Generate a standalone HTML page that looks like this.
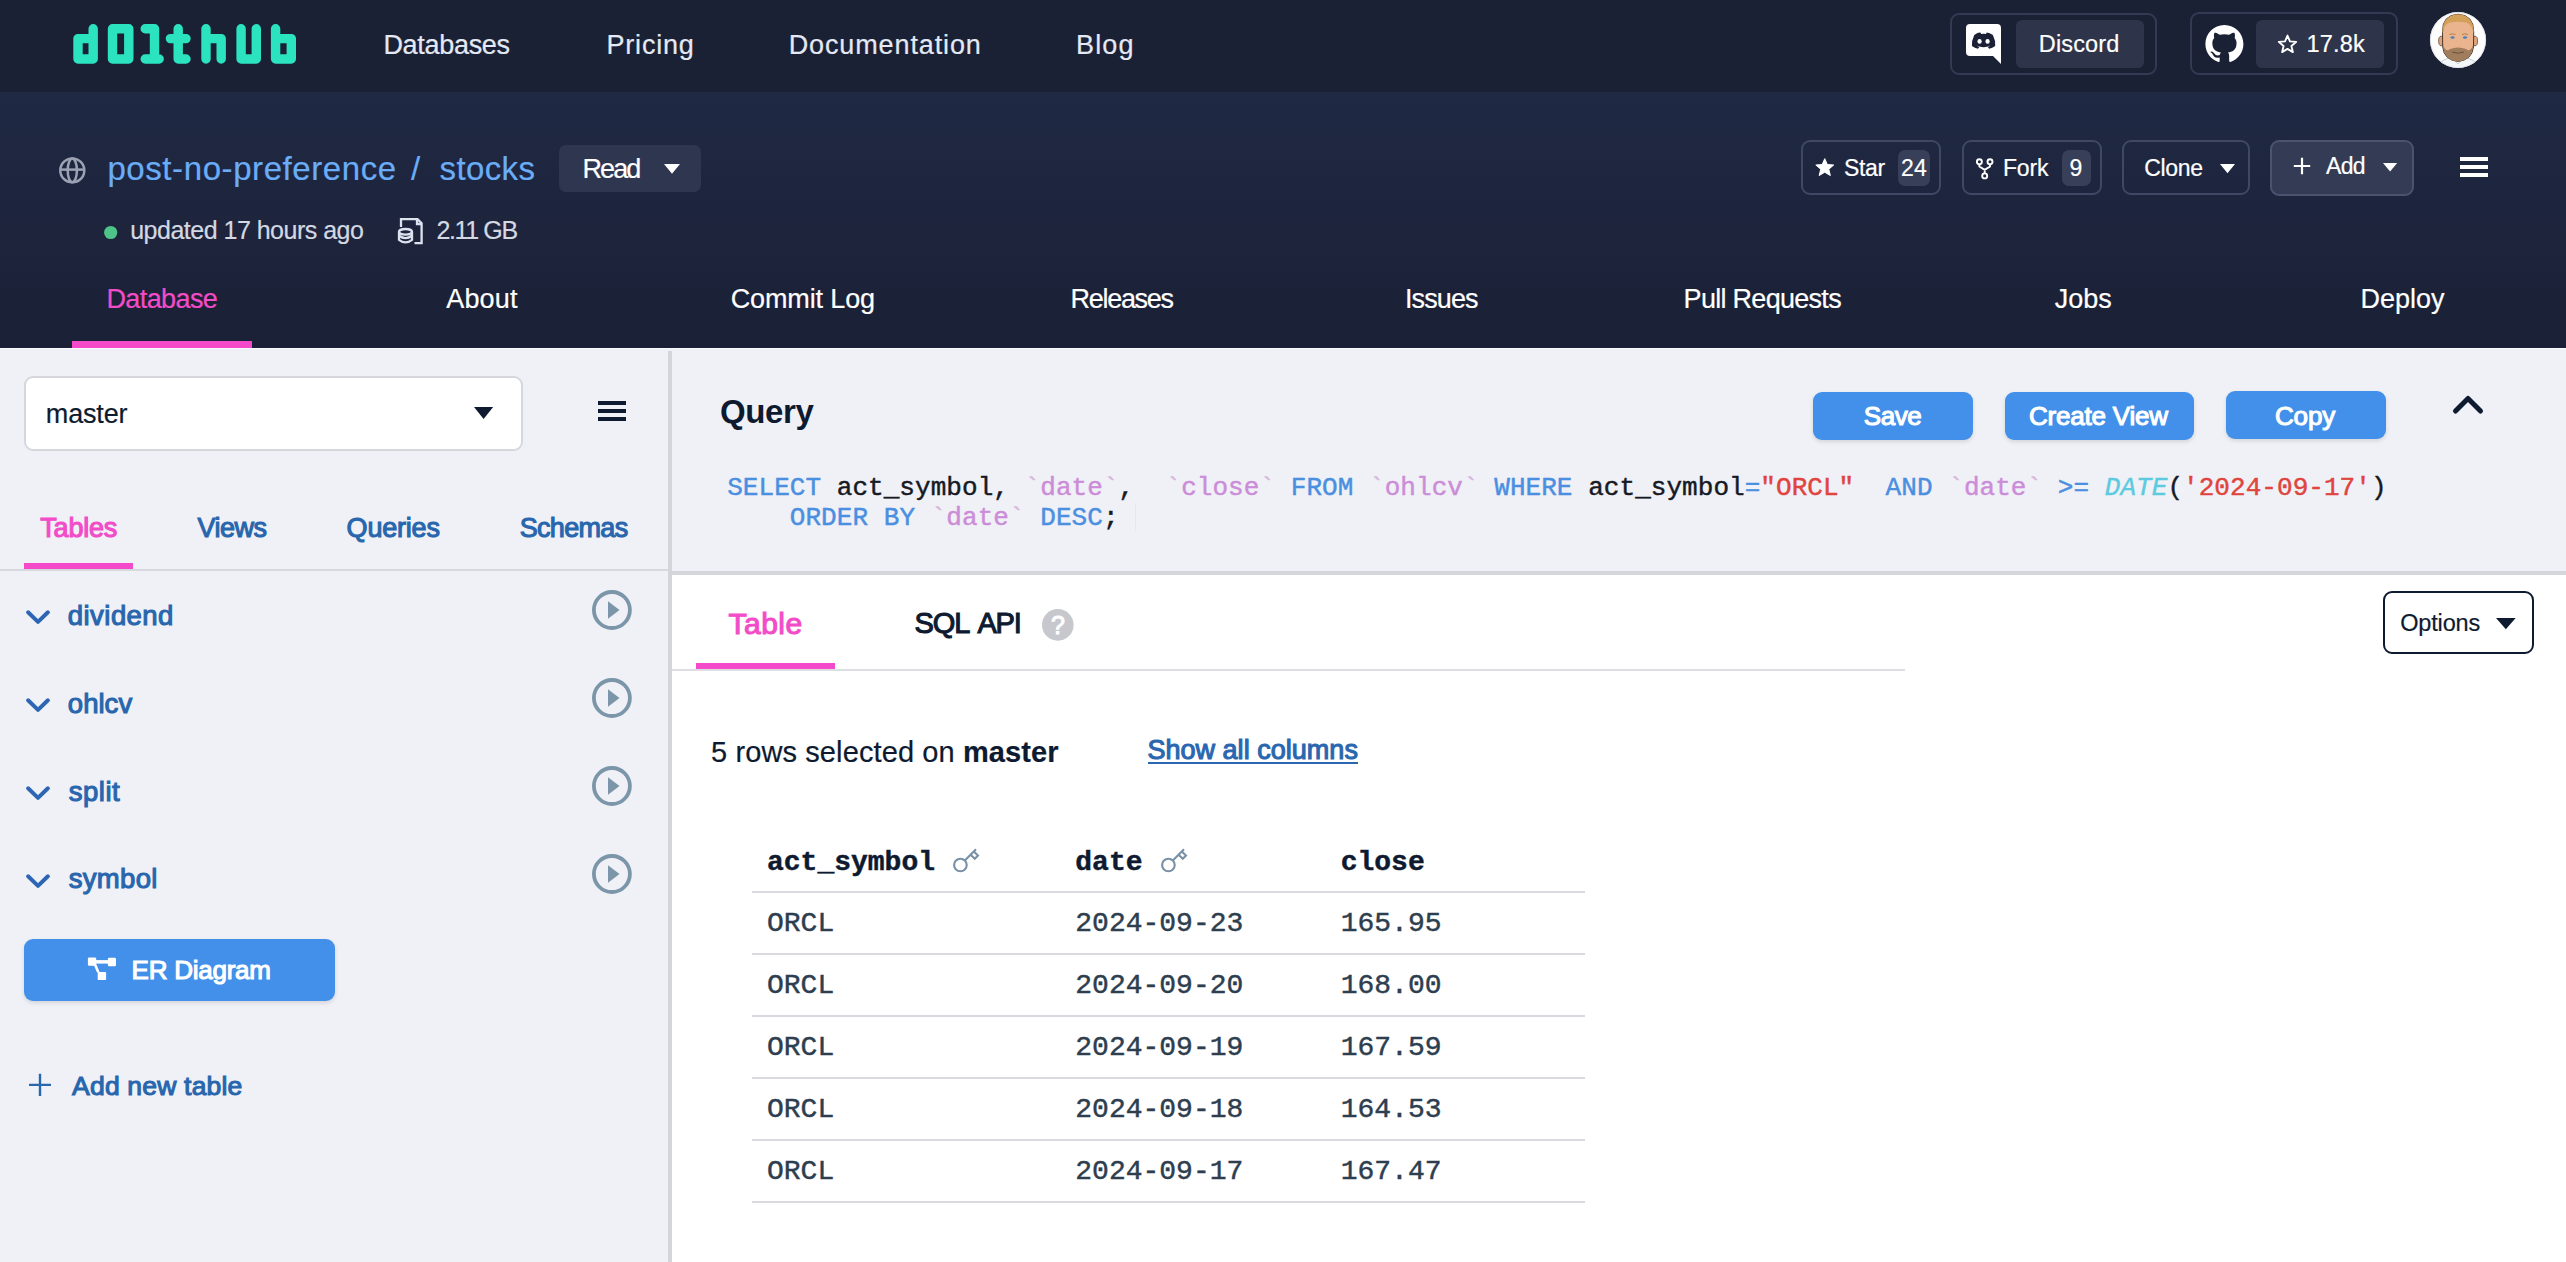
<!DOCTYPE html>
<html><head><meta charset="utf-8">
<style>
html,body{margin:0;padding:0;width:2566px;height:1262px;overflow:hidden;background:#f0f1f7;font-family:"Liberation Sans",sans-serif;}
.a{position:absolute;}
.t{position:absolute;white-space:pre;line-height:1;}
.m{font-family:"Liberation Mono",monospace;-webkit-text-stroke:0.45px currentColor;}
svg{position:absolute;overflow:visible;}
.bx{position:absolute;box-sizing:border-box;}
</style></head><body>
<!-- top nav -->
<div class="a" style="left:0;top:0;width:2566px;height:92px;background:#1b2135"></div>
<!-- repo header -->
<div class="a" style="left:0;top:92px;width:2566px;height:256px;background:linear-gradient(180deg,#202944 0%,#1d243c 55%,#1a2035 100%)"></div>
<div class="a" style="left:0;top:348px;width:2566px;height:1px;background:#fbfbfd"></div>

<!-- logo -->
<svg width="2566" height="100" style="left:0;top:0" viewBox="0 0 2566 100">
 <g fill="none" stroke="#2ce3c0" stroke-width="9.4" stroke-linejoin="round" stroke-linecap="round">
  <!-- d -->
  <path d="M93.2,28.7 V59 H78 V38.6 H93.2"/>
  <!-- 0 -->
  <path d="M112.5,28.7 H128.8 V59 H112.5 Z"/>
  <!-- 1 -->
  <path d="M145.2,28.7 H154.5 V59 M145.2,59 H159.2"/>
  <!-- t -->
  <path d="M178.2,28.7 V59 H186 M170.4,38.6 H186"/>
  <!-- h -->
  <path d="M206,28.7 V59 M206,38.6 H221.2 V59"/>
  <!-- U -->
  <path d="M241.1,28.7 V59 H256.3 V28.7"/>
  <!-- b -->
  <path d="M275.6,28.7 V59 H291.3 V38.6 H275.6"/>
 </g>
</svg>

<!-- discord box -->
<div class="bx" style="left:1950px;top:13px;width:207px;height:62px;border:2px solid #333b54;border-radius:9px"></div>
<div class="bx" style="left:2016px;top:20px;width:128px;height:48px;background:#2e3449;border-radius:6px"></div>
<svg style="left:1966px;top:24px" width="36" height="40" viewBox="0 0 36 40">
 <path d="M4,0 H31 Q35,0 35,4 V40 L27,32 H4 Q0,32 0,28 V4 Q0,0 4,0 Z" fill="#fff"/>
<g transform="translate(1.3,1.6) scale(0.93)">
 <path d="M7.5,10 Q12,7 14,7.5 L15,9 Q17.5,8.6 20,9 L21,7.5 Q24,8 27.5,10 Q30.5,16 30,22 Q27,24.5 23.5,25 L22,23 Q24,22.3 25,21.5 Q17.5,25 10,21.5 Q11,22.3 13,23 L11.5,25 Q8,24.5 5,22 Q4.5,16 7.5,10 Z" fill="#1b2036"/>
 <ellipse cx="13.2" cy="17" rx="2.3" ry="2.5" fill="#fff"/>
 <ellipse cx="21.8" cy="17" rx="2.3" ry="2.5" fill="#fff"/>
</g>
</svg>

<!-- github box -->
<div class="bx" style="left:2190px;top:12px;width:208px;height:63px;border:2px solid #333b54;border-radius:9px"></div>
<div class="bx" style="left:2256px;top:20px;width:128px;height:48px;background:#2e3449;border-radius:6px"></div>
<svg style="left:2204.5px;top:24.6px" width="38.8" height="38" viewBox="0 0 16 16">
 <path fill="#fff" d="M8 0C3.58 0 0 3.58 0 8c0 3.54 2.29 6.53 5.470 7.59.4.07.55-.17.55-.38 0-.19-.01-.82-.01-1.49-2.01.37-2.53-.49-2.69-.94-.09-.23-.48-.94-.82-1.13-.28-.15-.68-.52-.01-.53.63-.01 1.08.58 1.23.82.72 1.21 1.87.87 2.33.66.07-.52.28-.87.51-1.07-1.78-.2-3.64-.89-3.64-3.95 0-.87.31-1.59.82-2.15-.08-.2-.36-1.02.08-2.12 0 0 .67-.21 2.2.82.64-.18 1.32-.27 2-.27.68 0 1.36.09 2 .27 1.53-1.04 2.2-.82 2.2-.82.44 1.1.16 1.92.08 2.12.51.56.82 1.27.82 2.15 0 3.07-1.87 3.75-3.65 3.95.29.25.54.73.54 1.48 0 1.07-.01 1.93-.01 2.2 0 .21.15.46.55.38A8.013 8.013 0 0016 8c0-4.42-3.58-8-8-8z"/>
</svg>
<svg style="left:2276.5px;top:33.5px" width="21" height="20.5" viewBox="0 0 24 24">
 <path d="M12,1.8 L14.9,8.6 L22.2,9.2 L16.6,14 L18.3,21.2 L12,17.4 L5.7,21.2 L7.4,14 L1.8,9.2 L9.1,8.6 Z" fill="none" stroke="#fff" stroke-width="2.2" stroke-linejoin="round"/>
</svg>

<!-- avatar -->
<svg style="left:2430px;top:12px" width="56" height="56" viewBox="0 0 56 56">
 <defs><clipPath id="cav"><circle cx="28" cy="28" r="28"/></clipPath></defs>
 <circle cx="28" cy="28" r="28" fill="#fdfdfd"/>
 <g clip-path="url(#cav)">
  <path d="M6,58 Q8,49 19,46 L37,46 Q48,49 50,58 Z" fill="#f3f6f9" stroke="#b9c3cc" stroke-width="0.8"/>
  <path d="M22,46 L28,52 L34,46" fill="none" stroke="#b9c3cc" stroke-width="0.8"/>
  <ellipse cx="11.2" cy="29" rx="2.6" ry="4.8" fill="#e2a57b" stroke="#3a2a20" stroke-width="0.6"/>
  <ellipse cx="45" cy="29" rx="2.6" ry="4.8" fill="#e2a57b" stroke="#3a2a20" stroke-width="0.6"/>
  <path d="M12.5,20 Q12,3 28,2.2 Q44,3 43.7,20 L43.5,35 Q42,48 28,49.5 Q14,48 12.7,35 Z" fill="#eab48e" stroke="#3a2a20" stroke-width="0.9"/>
  <path d="M12.5,22 Q12,3 28,2.2 Q44,3 43.7,22 Q42,12 36,10.5 Q28,9 20,10.5 Q14,12 12.5,22 Z" fill="#d3a05a"/>
  <path d="M13,33 Q14,48 28,49.5 Q42,48 43.2,33 Q40,41 36,37 Q28,34 20,37 Q16,41 13,33 Z" fill="#a07d5c"/>
  <path d="M22,40 Q28,42.5 34,40" fill="none" stroke="#6e4f3a" stroke-width="1"/>
  <ellipse cx="22.5" cy="25.5" rx="2" ry="1.2" fill="#4c7fc2"/>
  <ellipse cx="35" cy="25.5" rx="2" ry="1.2" fill="#4c7fc2"/>
  <path d="M19.5,22.5 Q22.5,21.2 25.5,22.5 M32,22.5 Q35,21.2 38,22.5" fill="none" stroke="#b07a45" stroke-width="0.9"/>
 </g>
 <circle cx="28" cy="28" r="27.6" fill="none" stroke="#d8dde3" stroke-width="0.8"/>
</svg>

<!-- repo header items -->
<svg style="left:58.5px;top:156.6px" width="27" height="27" viewBox="0 0 27 27">
 <g fill="none" stroke="#9aa2b3" stroke-width="2.5">
  <ellipse cx="13.3" cy="13.4" rx="12" ry="11.9"/>
  <ellipse cx="13.3" cy="13.4" rx="4.6" ry="11.9"/>
  <line x1="1.5" y1="12.6" x2="25.2" y2="12.6"/>
 </g>
</svg>
<div class="bx" style="left:559px;top:144.5px;width:142px;height:47px;background:#2f3750;border-radius:7px"></div>
<svg style="left:664px;top:164px" width="16" height="10" viewBox="0 0 16 10"><path d="M0,0 H16 L8,9.7 Z" fill="#fff"/></svg>
<svg style="left:104px;top:226px" width="14" height="14" viewBox="0 0 14 14"><circle cx="6.7" cy="6.5" r="6.6" fill="#4ec488"/></svg>
<svg style="left:396px;top:217px" width="28" height="28" viewBox="0 0 28 28">
 <g fill="none" stroke="#dde3ee" stroke-width="2.3">
  <path d="M5,10 V2.2 H21.5 L25.6,6.3 V26.2 H18.5"/>
  <path d="M21,2.2 V7 H25.6"/>
  <ellipse cx="9.5" cy="14.8" rx="6.5" ry="2.8" fill="#1e263f"/>
  <path d="M3,14.8 V22.8 Q9.5,28 16,22.8 V14.8"/>
  <path d="M3,18.8 Q9.5,23.5 16,18.8"/>
 </g>
</svg>

<!-- star / fork / clone / add -->
<div class="bx" style="left:1800.5px;top:140.2px;width:140.5px;height:55.3px;border:2px solid #3f4864;border-radius:9px"></div>
<svg style="left:1814.5px;top:157.8px" width="19.5" height="18.7" viewBox="0 0 24 23"><path d="M12,0.8 L15.2,8 L23,8.6 L17,13.8 L18.9,21.6 L12,17.5 L5.1,21.6 L7,13.8 L1,8.6 L8.8,8 Z" fill="#fff" stroke="#fff" stroke-width="1.2" stroke-linejoin="round"/></svg>
<div class="bx" style="left:1898px;top:150px;width:32px;height:35.5px;background:#373f59;border-radius:7px"></div>
<div class="bx" style="left:1961.5px;top:140.2px;width:140.5px;height:55.3px;border:2px solid #3f4864;border-radius:9px"></div>
<svg style="left:1974px;top:157px" width="22" height="24" viewBox="0 0 22 24">
 <g fill="none" stroke="#fff" stroke-width="1.9">
  <circle cx="5.4" cy="4.8" r="2.5"/><circle cx="16" cy="4.8" r="2.5"/><circle cx="10.7" cy="18.9" r="2.5"/>
  <path d="M5.4,7.3 V9.5 L10.7,12.8 L16,9.5 V7.3 M10.7,12.8 V16.4"/>
 </g>
</svg>
<div class="bx" style="left:2062px;top:150px;width:29px;height:35.5px;background:#373f59;border-radius:7px"></div>
<div class="bx" style="left:2122.3px;top:140.2px;width:127.7px;height:55.3px;border:2px solid #3f4864;border-radius:9px"></div>
<svg style="left:2219.7px;top:164.4px" width="15" height="9.2" viewBox="0 0 15 9.2"><path d="M0,0 H15 L7.5,9.2 Z" fill="#fff"/></svg>
<div class="bx" style="left:2270.4px;top:140px;width:143.2px;height:55.5px;background:#333b55;border:2px solid #4a5370;border-radius:9px"></div>
<svg style="left:2293px;top:157px" width="18" height="18" viewBox="0 0 18 18"><path d="M9,0.8 V17.2 M0.8,9 H17.2" stroke="#fff" stroke-width="2.2"/></svg>
<svg style="left:2382.5px;top:162.7px" width="14.2" height="8.5" viewBox="0 0 14.2 8.5"><path d="M0,0 H14.2 L7.1,8.5 Z" fill="#fff"/></svg>
<div class="a" style="left:2460px;top:157px;width:28px;height:4px;background:#fff"></div>
<div class="a" style="left:2460px;top:165.2px;width:28px;height:4px;background:#fff"></div>
<div class="a" style="left:2460px;top:173px;width:28px;height:4px;background:#fff"></div>
<div class="a" style="left:72px;top:340.8px;width:180px;height:7.6px;background:#f449c8"></div>

<!-- left panel -->
<div class="bx" style="left:24.4px;top:375.5px;width:499px;height:75px;background:#fff;border:2px solid #d5d7dd;border-radius:9px"></div>
<svg style="left:474.3px;top:407.3px" width="19.2" height="12" viewBox="0 0 19.2 12"><path d="M0,0 H19.2 L9.6,12 Z" fill="#0e1a2f"/></svg>
<div class="a" style="left:597.5px;top:400.6px;width:28.5px;height:4.2px;background:#0e1a2f"></div>
<div class="a" style="left:597.5px;top:409px;width:28.5px;height:4.2px;background:#0e1a2f"></div>
<div class="a" style="left:597.5px;top:417.2px;width:28.5px;height:4.2px;background:#0e1a2f"></div>
<div class="a" style="left:23.8px;top:563px;width:109.2px;height:6px;background:#f449c8"></div>
<div class="a" style="left:0;top:568.9px;width:668px;height:2px;background:#d6d8de"></div>
<div class="a" style="left:668px;top:351px;width:4px;height:911px;background:#d4d5dc"></div>
<svg style="left:24px;top:606px" width="28" height="20" viewBox="0 0 28 20"><path d="M4.1,6.3 L14,15.9 L23.9,6.3" fill="none" stroke="#2c66b2" stroke-width="4" stroke-linecap="round" stroke-linejoin="round"/></svg>
<svg style="left:590px;top:588px" width="44" height="44" viewBox="0 0 44 44"><circle cx="21.9" cy="22" r="18" fill="none" stroke="#7b95a9" stroke-width="3.8"/><path d="M18,13.2 L29.5,22 L18,30.7 Z" fill="#7b95a9"/></svg>
<svg style="left:24px;top:694px" width="28" height="20" viewBox="0 0 28 20"><path d="M4.1,6.3 L14,15.9 L23.9,6.3" fill="none" stroke="#2c66b2" stroke-width="4" stroke-linecap="round" stroke-linejoin="round"/></svg>
<svg style="left:590px;top:676px" width="44" height="44" viewBox="0 0 44 44"><circle cx="21.9" cy="22" r="18" fill="none" stroke="#7b95a9" stroke-width="3.8"/><path d="M18,13.2 L29.5,22 L18,30.7 Z" fill="#7b95a9"/></svg>
<svg style="left:24px;top:782px" width="28" height="20" viewBox="0 0 28 20"><path d="M4.1,6.3 L14,15.9 L23.9,6.3" fill="none" stroke="#2c66b2" stroke-width="4" stroke-linecap="round" stroke-linejoin="round"/></svg>
<svg style="left:590px;top:764px" width="44" height="44" viewBox="0 0 44 44"><circle cx="21.9" cy="22" r="18" fill="none" stroke="#7b95a9" stroke-width="3.8"/><path d="M18,13.2 L29.5,22 L18,30.7 Z" fill="#7b95a9"/></svg>
<svg style="left:24px;top:870px" width="28" height="20" viewBox="0 0 28 20"><path d="M4.1,6.3 L14,15.9 L23.9,6.3" fill="none" stroke="#2c66b2" stroke-width="4" stroke-linecap="round" stroke-linejoin="round"/></svg>
<svg style="left:590px;top:852px" width="44" height="44" viewBox="0 0 44 44"><circle cx="21.9" cy="22" r="18" fill="none" stroke="#7b95a9" stroke-width="3.8"/><path d="M18,13.2 L29.5,22 L18,30.7 Z" fill="#7b95a9"/></svg>
<div class="bx" style="left:24px;top:939px;width:311px;height:62px;background:#4290ea;border-radius:9px;box-shadow:0 2px 4px rgba(0,0,0,0.12)"></div>
<svg style="left:87px;top:957px" width="30" height="24" viewBox="0 0 30 24">
 <g fill="#fff">
  <rect x="0.9" y="0.6" width="8.3" height="8.2" rx="1.2"/>
  <rect x="20.9" y="0.8" width="8.1" height="8.4" rx="1.2"/>
  <rect x="10.7" y="14.9" width="8.4" height="8.2" rx="1.2"/>
  <rect x="9" y="3.1" width="12" height="3.5"/>
  <path d="M6.5,7.5 L9.5,7.5 L12.8,15.5 L10,15.5 Z"/>
 </g>
</svg>
<svg style="left:28px;top:1073px" width="24" height="24" viewBox="0 0 24 24"><path d="M12,0.7 V23 M1,11.9 H23" stroke="#2866ad" stroke-width="2.4"/></svg>

<!-- query area -->
<div class="bx" style="left:1813px;top:392px;width:160px;height:48px;background:#4290ea;border-radius:9px;box-shadow:0 2px 4px rgba(0,0,0,0.12)"></div>
<div class="bx" style="left:2005px;top:392px;width:189px;height:48px;background:#4290ea;border-radius:9px;box-shadow:0 2px 4px rgba(0,0,0,0.12)"></div>
<div class="bx" style="left:2226px;top:391px;width:160px;height:48px;background:#4290ea;border-radius:9px;box-shadow:0 2px 4px rgba(0,0,0,0.12)"></div>
<svg style="left:2450px;top:392px" width="36" height="24" viewBox="0 0 36 24"><path d="M5.5,19 L18,6.5 L30.5,19" fill="none" stroke="#0e1a2f" stroke-width="5" stroke-linecap="round" stroke-linejoin="round"/></svg>
<div class="t m" style="left:727.2px;top:475.2px;font-size:26px;letter-spacing:0.05px"><span style="color:#4a8fe0;">SELECT</span><span style="color:#161a24;"> act_symbol, </span><span style="color:#d9b8dd;">`</span><span style="color:#cc8dd8;">date</span><span style="color:#d9b8dd;">`</span><span style="color:#161a24;">,  </span><span style="color:#d9b8dd;">`</span><span style="color:#cc8dd8;">close</span><span style="color:#d9b8dd;">`</span> <span style="color:#4a8fe0;">FROM</span> <span style="color:#d9b8dd;">`</span><span style="color:#cc8dd8;">ohlcv</span><span style="color:#d9b8dd;">`</span> <span style="color:#4a8fe0;">WHERE</span><span style="color:#161a24;"> act_symbol</span><span style="color:#4a8fe0;">=</span><span style="color:#e0443e;">"ORCL"</span>  <span style="color:#4a8fe0;">AND</span> <span style="color:#d9b8dd;">`</span><span style="color:#cc8dd8;">date</span><span style="color:#d9b8dd;">`</span> <span style="color:#4a8fe0;">&gt;=</span> <span style="color:#5ccbe0;font-style:italic">DATE</span><span style="color:#161a24;">(</span><span style="color:#e0443e;">'2024-09-17'</span><span style="color:#161a24;">)</span></div>
<div class="t m" style="left:727.2px;top:505.4px;font-size:26px;letter-spacing:0.05px">    <span style="color:#4a8fe0;">ORDER BY</span> <span style="color:#d9b8dd;">`</span><span style="color:#cc8dd8;">date</span><span style="color:#d9b8dd;">`</span> <span style="color:#4a8fe0;">DESC</span><span style="color:#161a24;">;</span></div>
<div class="a" style="left:1135px;top:503px;width:1px;height:28px;background:#e6e7ec"></div>
<div class="a" style="left:672px;top:571px;width:1894px;height:4px;background:#d5d6dc"></div>
<div class="a" style="left:672px;top:575px;width:1894px;height:687px;background:#ffffff"></div>
<div class="a" style="left:696px;top:663px;width:139px;height:6px;background:#f449c8"></div>
<div class="a" style="left:672px;top:669px;width:1233px;height:1.8px;background:#dcdee3"></div>
<svg style="left:1042px;top:608.8px" width="32" height="32" viewBox="0 0 32 32"><circle cx="15.8" cy="15.9" r="15.8" fill="#c6c8cd"/></svg>
<div class="bx" style="left:2383.3px;top:591.3px;width:150.7px;height:62.6px;border:2.5px solid #0e1a2f;border-radius:9px;background:#fff"></div>
<svg style="left:2496px;top:617.9px" width="19.7" height="11.3" viewBox="0 0 19.7 11.3"><path d="M0,0 H19.7 L9.85,11.3 Z" fill="#0e1a2f"/></svg>
<div class="a" style="left:1148.4px;top:761.8px;width:209.3px;height:2.2px;background:#2a67b0"></div>
<div class="t m" style="left:767.0px;top:848.9px;font-size:28px;font-weight:700;color:#0e1a2f">act_symbol</div>
<div class="t m" style="left:1075.3px;top:848.9px;font-size:28px;font-weight:700;color:#0e1a2f">date</div>
<div class="t m" style="left:1340.7px;top:848.9px;font-size:28px;font-weight:700;color:#0e1a2f">close</div>
<div class="t m" style="left:767.0px;top:909.9px;font-size:28px;color:#2d3e4f">ORCL</div>
<div class="t m" style="left:1075.3px;top:909.9px;font-size:28px;color:#2d3e4f">2024-09-23</div>
<div class="t m" style="left:1340.7px;top:909.9px;font-size:28px;color:#2d3e4f">165.95</div>
<div class="t m" style="left:767.0px;top:971.9px;font-size:28px;color:#2d3e4f">ORCL</div>
<div class="t m" style="left:1075.3px;top:971.9px;font-size:28px;color:#2d3e4f">2024-09-20</div>
<div class="t m" style="left:1340.7px;top:971.9px;font-size:28px;color:#2d3e4f">168.00</div>
<div class="t m" style="left:767.0px;top:1033.9px;font-size:28px;color:#2d3e4f">ORCL</div>
<div class="t m" style="left:1075.3px;top:1033.9px;font-size:28px;color:#2d3e4f">2024-09-19</div>
<div class="t m" style="left:1340.7px;top:1033.9px;font-size:28px;color:#2d3e4f">167.59</div>
<div class="t m" style="left:767.0px;top:1095.9px;font-size:28px;color:#2d3e4f">ORCL</div>
<div class="t m" style="left:1075.3px;top:1095.9px;font-size:28px;color:#2d3e4f">2024-09-18</div>
<div class="t m" style="left:1340.7px;top:1095.9px;font-size:28px;color:#2d3e4f">164.53</div>
<div class="t m" style="left:767.0px;top:1157.9px;font-size:28px;color:#2d3e4f">ORCL</div>
<div class="t m" style="left:1075.3px;top:1157.9px;font-size:28px;color:#2d3e4f">2024-09-17</div>
<div class="t m" style="left:1340.7px;top:1157.9px;font-size:28px;color:#2d3e4f">167.47</div>
<div class="a" style="left:752px;top:891.3px;width:833px;height:2px;background:#d8dadf"></div>
<div class="a" style="left:752px;top:953.3px;width:833px;height:2px;background:#d8dadf"></div>
<div class="a" style="left:752px;top:1015.3px;width:833px;height:2px;background:#d8dadf"></div>
<div class="a" style="left:752px;top:1077.3px;width:833px;height:2px;background:#d8dadf"></div>
<div class="a" style="left:752px;top:1139.3px;width:833px;height:2px;background:#d8dadf"></div>
<div class="a" style="left:752px;top:1201.3px;width:833px;height:2px;background:#d8dadf"></div>
<svg style="left:953px;top:848px" width="27" height="25" viewBox="0 0 27 25"><g fill="none" stroke="#7891a6" stroke-width="2.1"><circle cx="7.4" cy="17" r="6.3"/><path d="M11.8,12.4 L23,1.2 M17.6,6.8 L21.8,10.8 L25,7.6 L20.8,3.6"/></g></svg>
<svg style="left:1161.2px;top:848px" width="27" height="25" viewBox="0 0 27 25"><g fill="none" stroke="#7891a6" stroke-width="2.1"><circle cx="7.4" cy="17" r="6.3"/><path d="M11.8,12.4 L23,1.2 M17.6,6.8 L21.8,10.8 L25,7.6 L20.8,3.6"/></g></svg>
<div class="t" style="left:383.4px;top:32.3px;font-size:27px;letter-spacing:-0.302px;font-weight:400;color:#e4e9f4;-webkit-text-stroke:0.2px currentColor;">Databases</div>
<div class="t" style="left:606.5px;top:32.3px;font-size:27px;letter-spacing:0.805px;font-weight:400;color:#e4e9f4;-webkit-text-stroke:0.2px currentColor;">Pricing</div>
<div class="t" style="left:788.7px;top:32.3px;font-size:27px;letter-spacing:0.878px;font-weight:400;color:#e4e9f4;-webkit-text-stroke:0.2px currentColor;">Documentation</div>
<div class="t" style="left:1076px;top:32.3px;font-size:27px;letter-spacing:1.127px;font-weight:400;color:#e4e9f4;-webkit-text-stroke:0.2px currentColor;">Blog</div>
<div class="t" style="left:2038.8px;top:33.1px;font-size:23.5px;letter-spacing:0.143px;font-weight:400;color:#ffffff;-webkit-text-stroke:0.2px currentColor;">Discord</div>
<div class="t" style="left:2306.5px;top:33.0px;font-size:23.5px;letter-spacing:0.176px;font-weight:400;color:#ffffff;-webkit-text-stroke:0.2px currentColor;">17.8k</div>
<div class="t" style="left:107.4px;top:151.8px;font-size:33px;letter-spacing:0.587px;font-weight:400;color:#6aadf6;-webkit-text-stroke:0.2px currentColor;">post-no-preference</div>
<div class="t" style="left:411px;top:151.8px;font-size:33px;letter-spacing:7.76px;font-weight:400;color:#6aadf6;-webkit-text-stroke:0.2px currentColor;">/</div>
<div class="t" style="left:439.6px;top:151.8px;font-size:33px;letter-spacing:0.358px;font-weight:400;color:#6aadf6;-webkit-text-stroke:0.2px currentColor;">stocks</div>
<div class="t" style="left:582.5px;top:156.2px;font-size:27px;letter-spacing:-1.917px;font-weight:400;color:#ffffff;-webkit-text-stroke:0.2px currentColor;">Read</div>
<div class="t" style="left:130.2px;top:218.2px;font-size:25px;letter-spacing:-0.503px;font-weight:400;color:#d3d8e2;-webkit-text-stroke:0.2px currentColor;">updated 17 hours ago</div>
<div class="t" style="left:436.5px;top:218.2px;font-size:25px;letter-spacing:-1.375px;font-weight:400;color:#d3d8e2;-webkit-text-stroke:0.2px currentColor;">2.11 GB</div>
<div class="t" style="left:1843.9px;top:156.5px;font-size:23px;letter-spacing:-0.303px;font-weight:400;color:#ffffff;-webkit-text-stroke:0.2px currentColor;">Star</div>
<div class="t" style="left:1901px;top:156.5px;font-size:23px;letter-spacing:0.31px;font-weight:400;color:#ffffff;-webkit-text-stroke:0.2px currentColor;">24</div>
<div class="t" style="left:2003px;top:156.5px;font-size:23px;letter-spacing:-0.187px;font-weight:400;color:#ffffff;-webkit-text-stroke:0.2px currentColor;">Fork</div>
<div class="t" style="left:2069.6px;top:156.5px;font-size:23px;letter-spacing:0.82px;font-weight:400;color:#ffffff;-webkit-text-stroke:0.2px currentColor;">9</div>
<div class="t" style="left:2144.2px;top:157.2px;font-size:23px;letter-spacing:-0.34px;font-weight:400;color:#ffffff;-webkit-text-stroke:0.2px currentColor;">Clone</div>
<div class="t" style="left:2326px;top:154.6px;font-size:23px;letter-spacing:-0.665px;font-weight:400;color:#ffffff;-webkit-text-stroke:0.2px currentColor;">Add</div>
<div class="t" style="left:106.4px;top:286.4px;font-size:27px;letter-spacing:-0.589px;font-weight:400;color:#f24cc8;-webkit-text-stroke:0.2px currentColor;">Database</div>
<div class="t" style="left:446.3px;top:286.4px;font-size:27px;letter-spacing:0.132px;font-weight:400;color:#ffffff;-webkit-text-stroke:0.2px currentColor;">About</div>
<div class="t" style="left:730.7px;top:286.4px;font-size:27px;letter-spacing:-0.129px;font-weight:400;color:#ffffff;-webkit-text-stroke:0.2px currentColor;">Commit Log</div>
<div class="t" style="left:1070.6px;top:286.4px;font-size:27px;letter-spacing:-1.307px;font-weight:400;color:#ffffff;-webkit-text-stroke:0.2px currentColor;">Releases</div>
<div class="t" style="left:1405px;top:286.4px;font-size:27px;letter-spacing:-0.904px;font-weight:400;color:#ffffff;-webkit-text-stroke:0.2px currentColor;">Issues</div>
<div class="t" style="left:1683.6px;top:286.4px;font-size:27px;letter-spacing:-0.712px;font-weight:400;color:#ffffff;-webkit-text-stroke:0.2px currentColor;">Pull Requests</div>
<div class="t" style="left:2054.7px;top:286.4px;font-size:27px;letter-spacing:-0.007px;font-weight:400;color:#ffffff;-webkit-text-stroke:0.2px currentColor;">Jobs</div>
<div class="t" style="left:2360.4px;top:286.4px;font-size:27px;letter-spacing:-0.002px;font-weight:400;color:#ffffff;-webkit-text-stroke:0.2px currentColor;">Deploy</div>
<div class="t" style="left:45.8px;top:401.1px;font-size:27px;letter-spacing:-0.158px;font-weight:400;color:#0e1a2f;-webkit-text-stroke:0.2px currentColor;">master</div>
<div class="t" style="left:40.3px;top:515.1px;font-size:27px;letter-spacing:-0.216px;font-weight:400;color:#f24cc8;-webkit-text-stroke:1.1px currentColor;">Tables</div>
<div class="t" style="left:197.4px;top:515.1px;font-size:27px;letter-spacing:-0.485px;font-weight:400;color:#2866ad;-webkit-text-stroke:1.1px currentColor;">Views</div>
<div class="t" style="left:346.6px;top:515.1px;font-size:27px;letter-spacing:-0.202px;font-weight:400;color:#2866ad;-webkit-text-stroke:1.1px currentColor;">Queries</div>
<div class="t" style="left:519.7px;top:515.1px;font-size:27px;letter-spacing:-0.683px;font-weight:400;color:#2866ad;-webkit-text-stroke:1.1px currentColor;">Schemas</div>
<div class="t" style="left:67.8px;top:601.7px;font-size:27.5px;letter-spacing:0.454px;font-weight:400;color:#2866ad;-webkit-text-stroke:1.1px currentColor;">dividend</div>
<div class="t" style="left:67.8px;top:689.7px;font-size:27.5px;letter-spacing:0.038px;font-weight:400;color:#2866ad;-webkit-text-stroke:1.1px currentColor;">ohlcv</div>
<div class="t" style="left:68.8px;top:777.7px;font-size:27.5px;letter-spacing:0.5px;font-weight:400;color:#2866ad;-webkit-text-stroke:1.1px currentColor;">split</div>
<div class="t" style="left:68.8px;top:864.6px;font-size:27.5px;letter-spacing:0.285px;font-weight:400;color:#2866ad;-webkit-text-stroke:1.1px currentColor;">symbol</div>
<div class="t" style="left:131.6px;top:956.9px;font-size:26px;letter-spacing:-0.251px;font-weight:400;color:#ffffff;-webkit-text-stroke:1.1px currentColor;">ER Diagram</div>
<div class="t" style="left:72.1px;top:1072.6px;font-size:26.5px;letter-spacing:0.188px;font-weight:400;color:#2866ad;-webkit-text-stroke:1.1px currentColor;">Add new table</div>
<div class="t" style="left:720px;top:395.2px;font-size:33px;letter-spacing:-0.38px;font-weight:700;color:#0e1a2f;">Query</div>
<div class="t" style="left:1863.7px;top:402.9px;font-size:26px;letter-spacing:-0.4px;font-weight:400;color:#ffffff;-webkit-text-stroke:1.1px currentColor;">Save</div>
<div class="t" style="left:2029px;top:402.9px;font-size:26px;letter-spacing:-0.214px;font-weight:400;color:#ffffff;-webkit-text-stroke:1.1px currentColor;">Create View</div>
<div class="t" style="left:2275px;top:402.9px;font-size:26px;letter-spacing:-0.18px;font-weight:400;color:#ffffff;-webkit-text-stroke:1.1px currentColor;">Copy</div>
<div class="t" style="left:728.5px;top:608.5px;font-size:30px;letter-spacing:0.475px;font-weight:400;color:#f24cc8;-webkit-text-stroke:1.1px currentColor;">Table</div>
<div class="t" style="left:914.5px;top:609.4px;font-size:29px;letter-spacing:-1.132px;font-weight:400;color:#0e1a2f;-webkit-text-stroke:1.1px currentColor;word-spacing:4px;">SQL API</div>
<div class="t" style="left:2400.2px;top:612.0px;font-size:23.5px;letter-spacing:-0.16px;font-weight:400;color:#0e1a2f;-webkit-text-stroke:0.2px currentColor;">Options</div>
<div class="t" style="left:711px;top:737.6px;font-size:29px;letter-spacing:0.11px;font-weight:400;color:#0e1a2f;-webkit-text-stroke:0.2px currentColor;">5 rows selected on <b>master</b></div>
<div class="t" style="left:1147.4px;top:736.8px;font-size:27px;letter-spacing:0.029px;font-weight:400;color:#2a67b0;-webkit-text-stroke:1.1px currentColor;">Show all columns</div>
<div class="t" style="left:1051px;top:612.5px;font-size:25px;font-weight:400;color:#fff;-webkit-text-stroke:1px #fff">?</div>
</body></html>
